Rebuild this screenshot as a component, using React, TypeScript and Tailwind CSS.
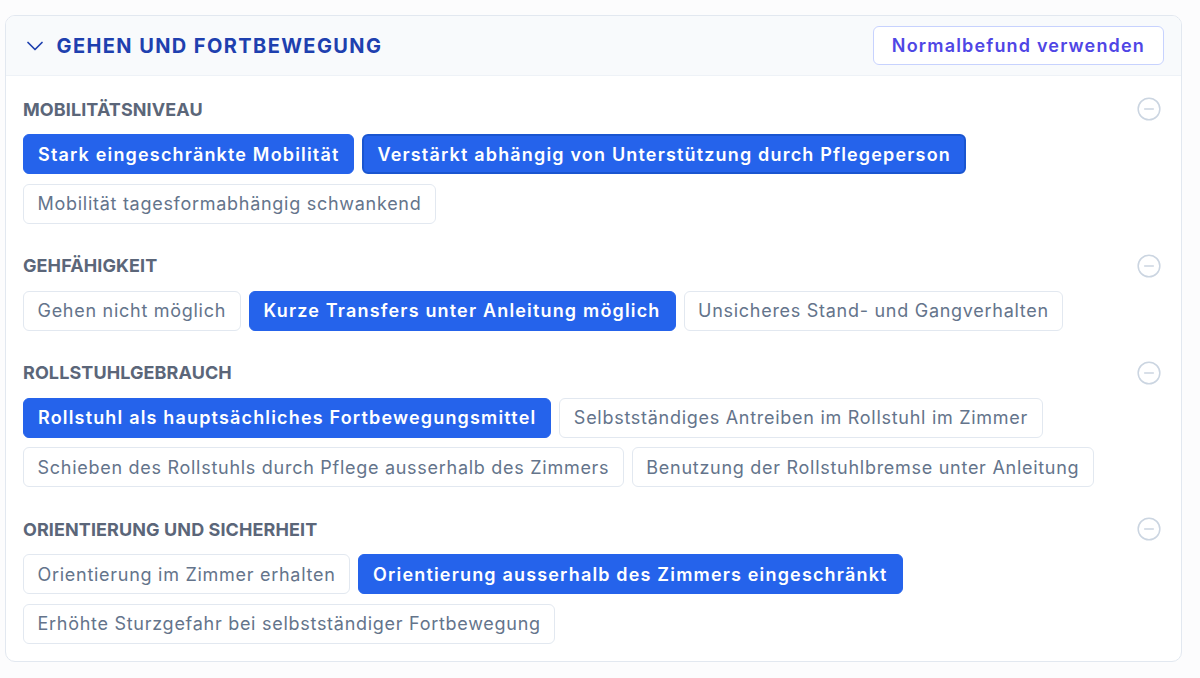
import { ChevronDown, MinusCircle } from "lucide-react";

type Option = { label: string; selected?: boolean; focused?: boolean };
type Group = { title: string; options: Option[] };

const groups: Group[] = [
  {
    title: "Mobilitätsniveau",
    options: [
      { label: "Stark eingeschränkte Mobilität", selected: true },
      { label: "Verstärkt abhängig von Unterstützung durch Pflegeperson", selected: true, focused: true },
      { label: "Mobilität tagesformabhängig schwankend" },
    ],
  },
  {
    title: "Gehfähigkeit",
    options: [
      { label: "Gehen nicht möglich" },
      { label: "Kurze Transfers unter Anleitung möglich", selected: true },
      { label: "Unsicheres Stand- und Gangverhalten" },
    ],
  },
  {
    title: "Rollstuhlgebrauch",
    options: [
      { label: "Rollstuhl als hauptsächliches Fortbewegungsmittel", selected: true },
      { label: "Selbstständiges Antreiben im Rollstuhl im Zimmer" },
      { label: "Schieben des Rollstuhls durch Pflege ausserhalb des Zimmers" },
      { label: "Benutzung der Rollstuhlbremse unter Anleitung" },
    ],
  },
  {
    title: "Orientierung und Sicherheit",
    options: [
      { label: "Orientierung im Zimmer erhalten" },
      { label: "Orientierung ausserhalb des Zimmers eingeschränkt", selected: true },
      { label: "Erhöhte Sturzgefahr bei selbstständiger Fortbewegung" },
    ],
  },
];

function Chip({ option }: { option: Option }) {
  if (option.selected) {
    return (
      <button
        className={
          option.focused
            ? "flex h-[40px] items-center rounded-md border-2 border-[#1a55d0] bg-[#2563eb] px-[13px] text-[18px] font-semibold tracking-[0.065em] text-white"
            : "flex h-[40px] items-center rounded-md border border-[#2563eb] bg-[#2563eb] px-[14px] text-[18px] font-semibold tracking-[0.065em] text-white"
        }
      >
        {option.label}
      </button>
    );
  }
  return (
    <button className="flex h-[40px] items-center rounded-md border-[1.5px] border-[#e2e8f0] bg-white px-[13.5px] text-[18px] tracking-[0.04em] text-[#64748b]">
      {option.label}
    </button>
  );
}

export default function App() {
  return (
    <div
      className="min-h-screen bg-[#fcfcfd] px-[5px] pt-[15px] pb-4"
      style={{ fontFamily: "Inter, 'Noto Sans', sans-serif" }}
    >
      <div className="w-[1177px] overflow-hidden rounded-[10px] border-[1.5px] border-[#e2e8f0] bg-white">
        <div className="flex h-[60px] items-center justify-between border-b border-[#eef2f7] bg-[#f8fafc] pl-[14.5px] pr-[17px]">
          <div className="flex items-center gap-[8px]">
            <ChevronDown className="h-[28px] w-[28px] text-[#1e40af]" strokeWidth={1.5} />
            <h2 className="text-[20px] font-bold uppercase tracking-[0.07em] text-[#1e40af]">
              Gehen und Fortbewegung
            </h2>
          </div>
          <button className="flex h-[39px] items-center rounded-md border-[1.5px] border-[#c7d2fe] bg-white px-[18px] text-[18px] font-semibold tracking-[0.065em] text-[#4f46e5]">
            Normalbefund verwenden
          </button>
        </div>

        <div className="flex flex-col gap-[30px] pl-[17px] pr-[19px] pt-[21px] pb-[17px]">
          {groups.map((g) => (
            <section key={g.title} className="flex flex-col gap-[13px]">
              <div className="flex h-[24px] items-center justify-between">
                <h3 className="text-[18px] font-bold uppercase tracking-[0.005em] text-[#5b6679]">{g.title}</h3>
                <MinusCircle className="h-[26px] w-[26px] text-[#cbd5e1]" strokeWidth={1.4} />
              </div>
              <div className="flex flex-wrap gap-x-[8px] gap-y-[9.5px]">
                {g.options.map((o) => (
                  <Chip key={o.label} option={o} />
                ))}
              </div>
            </section>
          ))}
        </div>
      </div>
    </div>
  );
}
